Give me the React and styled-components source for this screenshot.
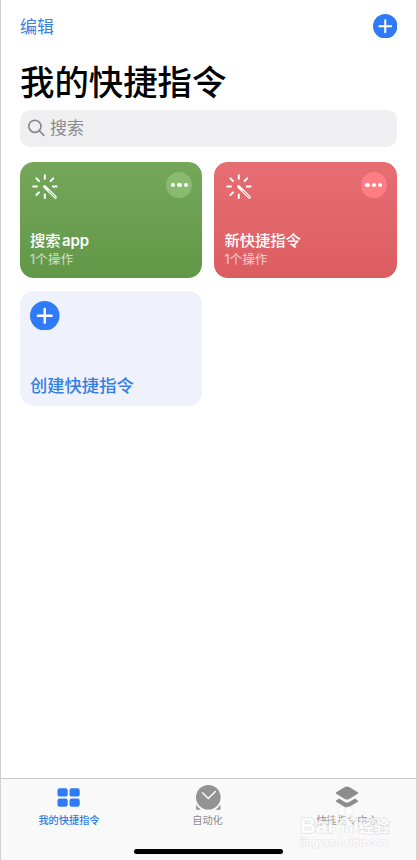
import React from "react";
import styled, { createGlobalStyle } from "styled-components";

const shortcuts = [
  { name: "搜索", suffix: " app", count: "1个操作", from: "#74a75a", to: "#639748", dot: "#8aba70" },
  { name: "新快捷指令", count: "1个操作", from: "#e66e73", to: "#dc5d61", dot: "#ff7d83" },
];

const PlusIcon = ({ size, arm }) => (
  <svg width={size} height={size} viewBox="0 0 24 24">
    <circle cx="12" cy="12" r="12" fill="#2f7af6" />
    <path
      d={`M12 ${12 - arm}V${12 + arm}M${12 - arm} 12H${12 + arm}`}
      stroke="#fff"
      strokeWidth="2"
      strokeLinecap="round"
    />
  </svg>
);

const SearchIcon = () => (
  <svg width="18" height="18" viewBox="0 0 18 18" fill="none" stroke="#858589" strokeWidth="1.6">
    <circle cx="6.9" cy="7.3" r="6.1" />
    <path d="M11.4 11.8L15.8 16.4" strokeLinecap="round" />
  </svg>
);

const WandIcon = ({ color }) => (
  <svg width="26" height="26" viewBox="0 0 26 26" fill="none" stroke="#fff" strokeLinecap="round">
    <path
      d="M12.8 1.2V4.8M12.8 20.4V24M1.2 12.5H5M20.8 12.5H24.6M4.4 4.4L7 7M21.2 4.4L18.6 7M4.4 21L7 18.4"
      strokeWidth="2"
    />
    <path d="M12.6 12.6L23.4 23.2" strokeWidth="3" />
    <path d="M16.8 16.8L23.2 23" stroke={color} strokeWidth="0.8" />
  </svg>
);

const GridIcon = () => (
  <svg width="24" height="26" viewBox="0 0 24 26" fill="#2f7af6">
    <rect x="0.5" y="4.2" width="10.2" height="8.4" rx="2.2" />
    <rect x="12.5" y="4.2" width="10.2" height="8.4" rx="2.2" />
    <rect x="0.5" y="14.4" width="10.2" height="8.4" rx="2.2" />
    <rect x="12.5" y="14.4" width="10.2" height="8.4" rx="2.2" />
  </svg>
);

const ClockIcon = () => (
  <svg width="26" height="26" viewBox="0 0 26 26">
    <circle cx="13.3" cy="13.2" r="12.3" fill="#939393" />
    <path d="M1.2 20.5Q2.6 23.6 6 25.8H1.2ZM25.4 20.5Q24 23.6 20.6 25.8H25.4Z" fill="#939393" />
    <path
      d="M7.6 8.8L13.3 14.4L20.4 7.6"
      fill="none"
      stroke="#fff"
      strokeWidth="1.4"
      strokeLinecap="round"
    />
  </svg>
);

const LayersIcon = () => (
  <svg width="24" height="26" viewBox="0 0 24 26" fill="#8c8c8c">
    <path d="M1.2 8.3L9.8 3.1Q12 1.9 14.2 3.1L22.8 8.3Q23.8 9 22.8 9.7L14.2 14.9Q12 16.1 9.8 14.9L1.2 9.7Q0.2 9 1.2 8.3Z" />
    <path d="M4 14.6L9.8 18Q12 19.2 14.2 18L20 14.6L22.8 16.4Q23.8 17.1 22.8 17.8L14.2 22.9Q12 24.1 9.8 22.9L1.2 17.8Q0.2 17.1 1.2 16.4Z" />
  </svg>
);

const PawIcon = () => (
  <svg width="24" height="31" viewBox="0 0 24 31" fill="#fff" stroke="#dcdcdc" strokeWidth="0.8">
    <ellipse cx="8.6" cy="5" rx="3.2" ry="4.2" />
    <ellipse cx="15.8" cy="5" rx="3.2" ry="4.2" />
    <ellipse cx="3.4" cy="12" rx="2.8" ry="3.8" />
    <ellipse cx="20.6" cy="12" rx="2.8" ry="3.8" />
    <path d="M12 11C9 11 8.2 14 5.6 16.8C1.4 21 1.8 29.5 6.5 29.5H17.5C22.2 29.5 22.6 21 18.4 16.8C15.8 14 15 11 12 11Z" />
    <text x="12" y="27" fontSize="13" textAnchor="middle" strokeWidth="1.2">
      du
    </text>
  </svg>
);

const App = () => {
  return (
    <>
      <GlobalStyle />
      <Screen>
        <Toolbar>
          <EditButton>编辑</EditButton>
          <PlusIcon size={24.5} arm={5.8} />
        </Toolbar>
        <Title>我的快捷指令</Title>
        <SearchBar>
          <SearchIcon />
          <span>搜索</span>
        </SearchBar>
        <Grid>
          {shortcuts.map((item) => (
            <Card key={item.name} $from={item.from} $to={item.to}>
              <CardTop>
                <WandIcon color={item.to} />
                <MoreButton $color={item.dot}>
                  <Dot />
                  <Dot />
                  <Dot />
                </MoreButton>
              </CardTop>
              <CardName>
                {item.name}
                {item.suffix && <Suffix>{item.suffix}</Suffix>}
              </CardName>
              <CardCount>{item.count}</CardCount>
            </Card>
          ))}
          <CreateCard>
            <PlusIcon size={29.5} arm={5.6} />
            <CreateLabel>创建快捷指令</CreateLabel>
          </CreateCard>
        </Grid>
        <TabBar>
          <Tab $active>
            <GridIcon />
            <span>我的快捷指令</span>
          </Tab>
          <Tab>
            <ClockIcon />
            <span>自动化</span>
          </Tab>
          <Tab>
            <LayersIcon />
            <span>快捷指令中心</span>
          </Tab>
          <HomeIndicator />
          <Watermark>
            <Brand>
              <BrandLatin>Bai</BrandLatin>
              <PawIcon />
              <BrandCn>经验</BrandCn>
            </Brand>
            <BrandUrl>jingyan.baidu.com</BrandUrl>
          </Watermark>
        </TabBar>
      </Screen>
    </>
  );
};

export default App;

const GlobalStyle = createGlobalStyle`
  * {
    box-sizing: border-box;
  }
  body {
    margin: 0;
    background: #fff;
    font-family: Inter, "Noto Sans CJK SC", sans-serif;
  }
  svg {
    display: block;
    flex-shrink: 0;
  }
`;

const Screen = styled.div`
  display: flex;
  flex-direction: column;
  width: 417px;
  height: 860px;
  overflow: hidden;
  background: #fff;
  border-left: 1px solid #d2d2d2;
  border-right: 1px solid #d2d2d2;
`;

const Toolbar = styled.div`
  display: flex;
  justify-content: space-between;
  align-items: center;
  height: 52px;
  padding: 0 19px;
`;

const EditButton = styled.span`
  padding-top: 2px;
  font-size: 17px;
  line-height: 24px;
  color: #3b7fe0;
`;

const Title = styled.h1`
  height: 58px;
  margin: 0;
  padding-left: 19px;
  font-size: 34.4px;
  font-weight: 500;
  line-height: 61px;
  color: #000;
`;

const SearchBar = styled.div`
  display: flex;
  align-items: center;
  gap: 4px;
  height: 36.5px;
  margin: 0 19px;
  padding-left: 8px;
  border-radius: 10px;
  background: #efeff2;
  font-size: 17px;
  line-height: 36px;
  color: #8a8a8e;
`;

const Grid = styled.div`
  display: grid;
  grid-template-columns: 182.4px 182.4px;
  grid-auto-rows: 115.5px;
  gap: 13px 12px;
  flex: 1;
  padding: 15.5px 19px 0;
`;

const Card = styled.div`
  display: flex;
  flex-direction: column;
  padding: 10px;
  border-radius: 14px;
  background: linear-gradient(${(props) => props.$from}, ${(props) => props.$to});
  color: #fff;
`;

const CardTop = styled.div`
  display: flex;
  justify-content: space-between;
  height: 59px;
  padding: 2px 0 0 2px;
`;

const MoreButton = styled.div`
  display: flex;
  justify-content: center;
  align-items: center;
  gap: 2px;
  width: 26px;
  height: 26px;
  margin-top: -2px;
  border-radius: 50%;
  background: ${(props) => props.$color};
`;

const Dot = styled.i`
  width: 4.4px;
  height: 4.4px;
  border-radius: 50%;
  background: #fff;
`;

const CardName = styled.div`
  font-size: 15.3px;
  font-weight: 500;
  line-height: 23px;
  white-space: pre;
`;

const Suffix = styled.span`
  font-size: 15px;
  font-weight: 600;
  word-spacing: -2.5px;
`;

const CardCount = styled.div`
  font-size: 12.4px;
  line-height: 16px;
  letter-spacing: 0.3px;
  opacity: 0.7;
`;

const CreateCard = styled.div`
  display: flex;
  flex-direction: column;
  justify-content: space-between;
  padding: 10px 10px 8px;
  border-radius: 14px;
  background: #eff2fd;
`;

const CreateLabel = styled.div`
  font-size: 17.3px;
  font-weight: 500;
  line-height: 24px;
  color: #347fe2;
`;

const TabBar = styled.div`
  position: relative;
  display: grid;
  grid-template-columns: 136px 141px 138px;
  height: 82px;
  padding-top: 5px;
  border-top: 1px solid #c9c9c9;
  background: #f9f9f9;
`;

const Tab = styled.div`
  display: flex;
  flex-direction: column;
  align-items: center;
  gap: 2px;
  font-size: 10.2px;
  font-weight: ${(props) => (props.$active ? 500 : 400)};
  line-height: 16px;
  color: ${(props) => (props.$active ? "#347fe2" : "#8c8c8c")};
`;

const HomeIndicator = styled.div`
  position: absolute;
  left: 133px;
  bottom: 6px;
  width: 149px;
  height: 5px;
  border-radius: 3px;
  background: #000;
`;

const Watermark = styled.div`
  position: absolute;
  left: 299px;
  top: 27px;
  width: 90px;
  font-family: "Liberation Sans", "Noto Sans CJK SC", sans-serif;
  font-weight: 700;
  color: #fff;
  opacity: 0.75;
  white-space: nowrap;
  paint-order: stroke fill;
`;

const Brand = styled.div`
  display: flex;
  align-items: flex-end;
  height: 31px;
`;

const BrandLatin = styled.span`
  font-size: 22px;
  line-height: 22px;
  letter-spacing: -0.3px;
  -webkit-text-stroke: 1.6px #d9d9d9;
`;

const BrandCn = styled.span`
  margin-left: 1px;
  font-size: 15.5px;
  line-height: 21px;
  -webkit-text-stroke: 1.6px #d9d9d9;
`;

const BrandUrl = styled.div`
  font-size: 10.1px;
  line-height: 12px;
  -webkit-text-stroke: 1.2px #e0e0e0;
`;
